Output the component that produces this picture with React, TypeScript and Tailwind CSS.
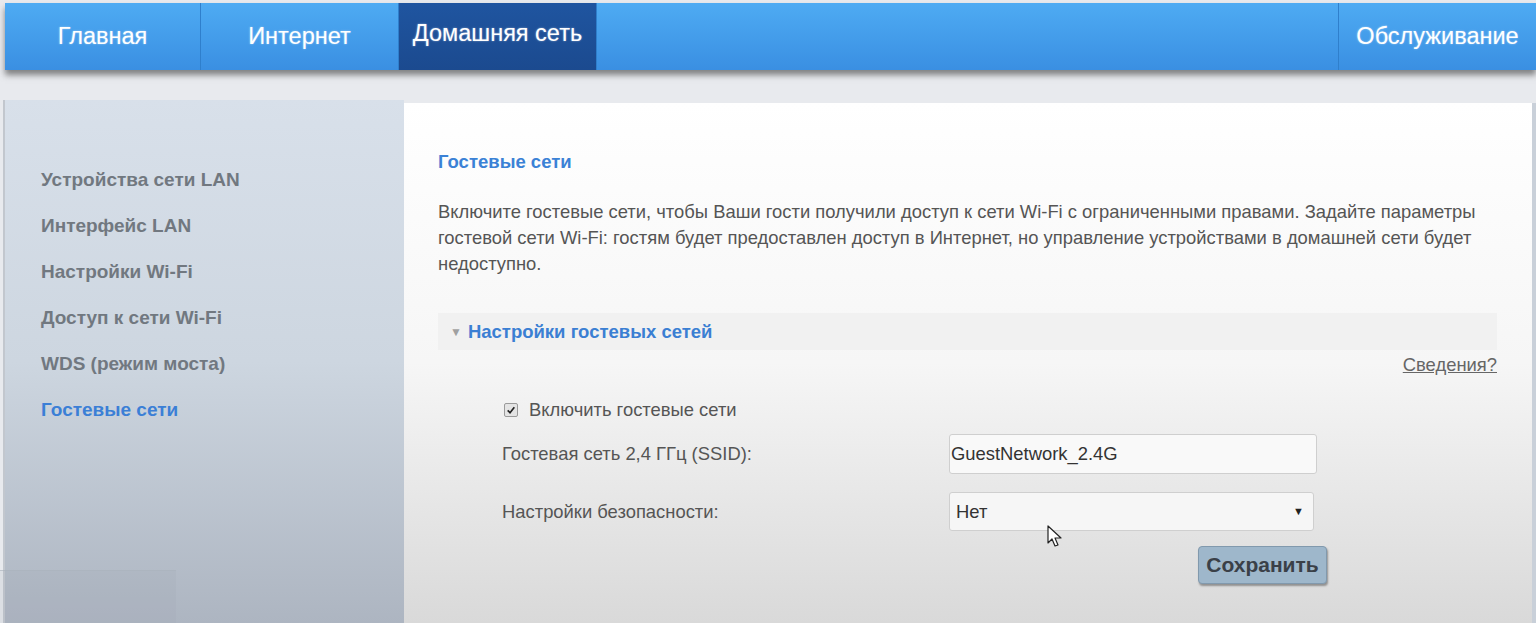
export default function App() {
  const tabs = [
    { label: 'Главная', w: 'w-[196px]', active: false },
    { label: 'Интернет', w: 'w-[198px]', active: false },
    { label: 'Домашняя сеть', w: 'w-[198px]', active: true },
  ];
  const side = [
    'Устройства сети LAN',
    'Интерфейс LAN',
    'Настройки Wi-Fi',
    'Доступ к сети Wi-Fi',
    'WDS (режим моста)',
  ];

  return (
    <div className="relative w-[1536px] h-[623px] overflow-hidden bg-[#e8eaee] font-['Liberation_Sans',Arial,sans-serif]">
      {/* top menu */}
      <nav className="mt-[3px] ml-[5px] h-[67px] flex bg-gradient-to-b from-[#4eabf3] to-[#3a8fe2] shadow-[0_5px_6px_rgba(60,60,60,0.6)] relative z-10">
        {tabs.map((t) => (
          <div
            key={t.label}
            className={`${t.w} h-full flex items-center justify-center text-[23.5px] text-white [text-shadow:0_0_2px_rgba(255,255,255,0.5)] border-r border-[#2f7fcc] ${
              t.active ? 'bg-gradient-to-b from-[#1f55a0] to-[#1b4a8f] pb-[5px]' : ''
            }`}
          >
            {t.label}
          </div>
        ))}
        <div className="flex-1" />
        <div className="w-[198px] h-full flex items-center justify-center text-[23.5px] text-white [text-shadow:0_0_2px_rgba(255,255,255,0.5)] border-l border-[#2f7fcc]">
          Обслуживание
        </div>
      </nav>

      {/* body */}
      <div className="mt-[30px] ml-[3px] flex h-[523px]">
        <aside className="w-[401px] border-l-2 border-[#c2c7ce] bg-gradient-to-b from-[#d8e0ea] via-[#cdd6e0] to-[#adb5c1] pt-[68px] pl-[36px]">
          <ul className="flex flex-col gap-[23px]">
            {side.map((s) => (
              <li key={s} className="text-[19px] leading-[23px] font-bold text-[#717880]">
                {s}
              </li>
            ))}
            <li className="text-[19px] leading-[23px] font-bold text-[#3b7fd6]">Гостевые сети</li>
          </ul>
        </aside>

        <main className="w-[1128px] mt-[3px] bg-gradient-to-b from-white via-[#f6f6f6] to-[#d9d9d9] pl-[34px] pr-[35px] pt-[48px]">
          <h2 className="text-[18.5px] font-bold text-[#3b82d6] leading-[22px]">Гостевые сети</h2>
          <p className="mt-[26px] text-[18.4px] leading-[26px] text-[#555]">
            Включите гостевые сети, чтобы Ваши гости получили доступ к сети Wi-Fi с ограниченными правами. Задайте параметры
            гостевой сети Wi-Fi: гостям будет предоставлен доступ в Интернет, но управление устройствами в домашней сети будет
            недоступно.
          </p>

          <div className="mt-[36px] h-[37px] bg-[#f1f1f1] flex items-center pl-[12px] gap-[6px]">
            <span className="text-[12px] text-[#a0a0a0]">▼</span>
            <span className="text-[18.5px] font-bold text-[#3b7fd3]">Настройки гостевых сетей</span>
          </div>
          <div className="flex justify-end mt-[4px]">
            <span className="text-[18.4px] text-[#666] underline leading-[22px]">Сведения?</span>
          </div>

          <div className="pl-[66px] mt-[23px]">
            <label className="flex items-center gap-[11px] h-[22px]">
              <span className="w-[14px] h-[14px] rounded-[2px] border border-[#9a9a9a] bg-[#e4e4e4] flex items-center justify-center">
                <svg viewBox="0 0 12 12" className="w-[10px] h-[10px]">
                  <path d="M2 6.5 L4.8 9.2 L10 2.6" fill="none" stroke="#222" strokeWidth="2" />
                </svg>
              </span>
              <span className="text-[18.4px] text-[#555]">Включить гостевые сети</span>
            </label>

            <div className="flex items-center mt-[13px] h-[40px] -ml-[2px]">
              <span className="w-[447px] text-[18.4px] text-[#555]">Гостевая сеть 2,4 ГГц (SSID):</span>
              <div className="w-[368px] h-[40px] border border-[#cfcfcf] rounded-[3px] bg-[#f9f9f9] flex items-center pl-[1px] text-[18.4px] text-[#333]">
                GuestNetwork_2.4G
              </div>
            </div>

            <div className="flex items-center mt-[18px] h-[39px] -ml-[2px]">
              <span className="w-[447px] text-[18.4px] text-[#555]">Настройки безопасности:</span>
              <div className="w-[365px] h-[39px] border border-[#cfcfcf] rounded-[3px] bg-[#f6f6f6] flex items-center justify-between pl-[6px] pr-[9px] text-[18.4px] text-[#333]">
                <span>Нет</span>
                <span className="text-[11px] text-[#222]">▼</span>
              </div>
            </div>

            <div className="flex mt-[15px] pl-[694px]">
              <button className="w-[129px] h-[38px] rounded-[4px] bg-[#9eb7cb] border border-[#8199ad] shadow-[1px_2px_2px_rgba(0,0,0,0.35)] text-[21px] font-bold text-[#3a4048]">
                Сохранить
              </button>
            </div>
          </div>
        </main>
        <div className="flex-1 mt-[3px] bg-[#c9d0d9]" />
      </div>

      {/* video overlay thumbnail */}
      <div className="absolute left-0 top-[570px] w-[176px] h-[53px] bg-[#9aa2ad]/15 border-t border-[#aab2bc]/60" />

      {/* mouse cursor */}
      <svg className="absolute left-[1047px] top-[525px] w-[16px] h-[24px]" viewBox="0 0 16 24">
        <path d="M1 1 L1 18 L5 14 L8 21 L11 20 L8 13 L14 13 Z" fill="#fff" stroke="#222" strokeWidth="1.2" strokeLinejoin="round" />
      </svg>
    </div>
  );
}
